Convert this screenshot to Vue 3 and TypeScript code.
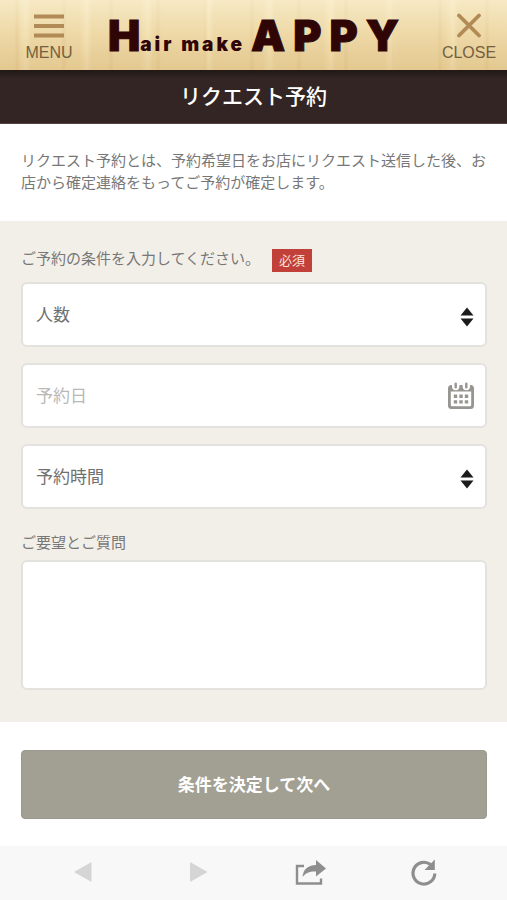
<script setup lang="ts">
import { ref } from 'vue'

const people = ref('')
const date = ref('')
const time = ref('')
const message = ref('')
const peopleOptions = [1, 2, 3, 4, 5]
const timeOptions = ['10:00', '11:00', '12:00', '13:00', '14:00', '15:00', '16:00', '17:00']
</script>

<template>
  <div class="page">
    <header class="header">
      <button type="button" class="header-button">
        <svg class="header-icon" viewBox="0 0 30 26" aria-hidden="true">
          <path d="M0 3.5h30M0 13h30M0 22.5h30" />
        </svg>
        <span>MENU</span>
      </button>
      <div class="logo">
        <span class="big">H</span><span class="small">air make</span><span class="big name">APPY</span>
      </div>
      <button type="button" class="header-button">
        <svg class="header-icon" viewBox="0 0 30 26" aria-hidden="true">
          <path d="M5 2.5l20 20M25 2.5l-20 20" stroke-linecap="round" />
        </svg>
        <span>CLOSE</span>
      </button>
    </header>

    <h1 class="title">リクエスト予約</h1>

    <p class="intro">リクエスト予約とは、予約希望日をお店にリクエスト送信した後、お店から確定連絡をもってご予約が確定します。</p>

    <form class="form" @submit.prevent>
      <div class="conditions">
        <div class="heading">
          <label class="label" for="people">ご予約の条件を入力してください。</label>
          <span class="required">必須</span>
        </div>
        <div class="fields">
          <div class="field">
            <select id="people" v-model="people">
              <option value="">人数</option>
              <option v-for="n in peopleOptions" :key="n" :value="String(n)">{{ n }}</option>
            </select>
            <svg class="arrows" viewBox="0 0 14 20" aria-hidden="true">
              <path d="M7 0.5L13.5 8.5H0.5zM7 19.5L0.5 11.5H13.5z" />
            </svg>
          </div>
          <div class="field">
            <input id="date" v-model="date" type="text" placeholder="予約日" aria-label="予約日" />
            <svg class="calendar" viewBox="0 0 26 28" aria-hidden="true">
              <path
                fill-rule="evenodd"
                d="M3.500 3H4V4.500A3.700 3.700 0 0 0 11.400 4.500V3H14.600V4.500A3.700 3.700 0 0 0 22 4.500V3H22.500A3.500 3.500 0 0 1 26 6.500V23.500A3.500 3.500 0 0 1 22.500 27H3.500A3.500 3.500 0 0 1 0 23.500V6.500A3.500 3.500 0 0 1 3.500 3ZM2.800 9.500V23A1.300 1.300 0 0 0 4.100 24.300H21.900A1.300 1.300 0 0 0 23.200 23V9.500Z"
              />
              <rect x="6.500" y="0.500" width="2.400" height="6" rx="1.200" />
              <rect x="17.100" y="0.500" width="2.400" height="6" rx="1.200" />
              <path d="M5.800 12.500h3.400v3.400h-3.400zM11.300 12.500h3.400v3.400h-3.400zM16.800 12.500h3.400v3.400h-3.400zM5.800 18.200h3.400v3.400h-3.400zM11.300 18.200h3.400v3.400h-3.400zM16.800 18.200h3.400v3.400h-3.400z" />
            </svg>
          </div>
          <div class="field">
            <select id="time" v-model="time" aria-label="予約時間">
              <option value="">予約時間</option>
              <option v-for="t in timeOptions" :key="t" :value="t">{{ t }}</option>
            </select>
            <svg class="arrows" viewBox="0 0 14 20" aria-hidden="true">
              <path d="M7 0.5L13.5 8.5H0.5zM7 19.5L0.5 11.5H13.5z" />
            </svg>
          </div>
        </div>
        <label class="label message-label" for="message">ご要望とご質問</label>
        <textarea id="message" v-model="message"></textarea>
      </div>
      <div class="actions">
        <button type="submit" class="submit">条件を決定して次へ</button>
      </div>
    </form>

    <nav class="toolbar">
      <button type="button" aria-label="戻る" disabled>
        <svg class="nav-icon faint" viewBox="0 0 32 28" aria-hidden="true"><path d="M7 13L24.500 3V23z" /></svg>
      </button>
      <button type="button" aria-label="進む" disabled>
        <svg class="nav-icon faint" viewBox="0 0 32 28" aria-hidden="true"><path d="M26.500 13L9 3V23z" /></svg>
      </button>
      <button type="button" aria-label="共有">
        <svg class="nav-icon" viewBox="0 0 32 28" aria-hidden="true">
          <path d="M10 7H3V24.500H27V19.500" fill="none" stroke="#8e8e8e" stroke-width="2.400" />
          <path d="M8.500 18C9.500 10 13.500 6.500 22 6V1L32 9.500L22 17.500V12.500C16 12.200 12 13.500 8.500 18Z" />
        </svg>
      </button>
      <button type="button" aria-label="再読み込み">
        <svg class="nav-icon" viewBox="0 0 32 28" aria-hidden="true">
          <path d="M26.800 14.500A10.900 10.900 0 1 1 22.500 5.500" fill="none" stroke="#8e8e8e" stroke-width="3.200" />
          <path d="M26.800 0.500V11H16.500Z" />
        </svg>
      </button>
    </nav>
  </div>
</template>

<style>
body {
  margin: 0;
  background: #fff;
}
</style>

<style scoped>
.page {
  display: flex;
  flex-direction: column;
  min-height: 100vh;
  font-family: "Liberation Sans", "Noto Sans CJK JP", sans-serif;
  color: #777;
}

button,
select,
input,
textarea {
  box-sizing: border-box;
  margin: 0;
  border: 0;
  font-family: inherit;
}

.header {
  display: grid;
  grid-template-columns: 98px 1fr 76px;
  align-items: center;
  box-sizing: border-box;
  height: 70px;
  padding-top: 6px;
  background:
    linear-gradient(rgba(255, 250, 225, 0.55), rgba(255, 240, 200, 0.1) 50%, rgba(198, 158, 85, 0.24)),
    repeating-linear-gradient(90deg, rgba(190, 145, 70, 0) 0 14px, rgba(190, 145, 70, 0.12) 17px, rgba(190, 145, 70, 0) 20px 47px),
    repeating-linear-gradient(90deg, rgba(255, 245, 210, 0) 0 18px, rgba(255, 245, 210, 0.35) 26px, rgba(255, 245, 210, 0) 31px 61px),
    #ecd5a2;
}

.header-button {
  display: flex;
  flex-direction: column;
  align-items: center;
  gap: 4px;
  padding: 0;
  background: none;
  color: #736040;
  font-size: 16px;
  line-height: 20px;
}

.header-icon {
  width: 30px;
  height: 26px;
  fill: none;
  stroke: #b18a56;
  stroke-width: 3.8;
}

.logo {
  display: flex;
  align-items: baseline;
  justify-content: center;
  padding: 4px 14px 0 0;
  font-family: Inter, "Liberation Sans", sans-serif;
  font-weight: 900;
  line-height: 50px;
  color: #300505;
  white-space: nowrap;
}

.big {
  font-size: 43px;
  -webkit-text-stroke: 1px #300505;
}

.small {
  font-size: 19px;
  letter-spacing: 3px;
}

.name {
  margin-left: 6px;
  letter-spacing: 8px;
}

.title {
  margin: 0;
  padding: 11px 0 10px;
  border-bottom: 1px solid #51423f;
  background: linear-gradient(#211816, #322524 8px);
  color: #fff;
  font-size: 21px;
  font-weight: 500;
  line-height: 32px;
  text-align: center;
}

.intro {
  margin: 0;
  padding: 26px 20px 27px 21px;
  font-size: 15px;
  line-height: 22px;
}

.conditions {
  padding: 26px 20px 32px 21px;
  background: #f2efe9;
}

.heading {
  display: flex;
  align-items: center;
  gap: 12px;
  height: 26px;
}

.label {
  display: block;
  font-size: 15px;
  line-height: 26px;
}

.heading .label {
  padding-bottom: 2px;
}

.required {
  padding: 0 7px;
  background: #c2403a;
  color: #fbe3dc;
  font-size: 13px;
  line-height: 23px;
}

.fields {
  display: grid;
  gap: 16px;
  padding-top: 9px;
}

.field {
  display: grid;
  align-items: center;
}

.field > * {
  grid-area: 1 / 1;
}

.field select,
.field input {
  width: 100%;
  height: 65px;
  padding: 2px 52px 0 13px;
  border: 2px solid #e3e2de;
  border-radius: 6px;
  appearance: none;
  background: #fff;
  color: #707070;
  font-size: 17px;
}

.field input::placeholder {
  color: #b8b8b8;
  opacity: 1;
}

.arrows,
.calendar {
  justify-self: end;
  pointer-events: none;
}

.arrows {
  width: 14px;
  height: 20px;
  margin: 4px 13px 0 0;
  fill: #1c1a1a;
}

.calendar {
  width: 26px;
  height: 28px;
  margin-right: 13px;
  fill: #979590;
}

.message-label {
  padding-top: 21px;
}

textarea {
  display: block;
  width: 100%;
  height: 130px;
  margin-top: 4px;
  padding: 14px;
  border: 2px solid #e3e2de;
  border-radius: 6px;
  background: #fff;
  color: #707070;
  font-size: 17px;
  resize: none;
}

.actions {
  padding: 28px 20px 27px 21px;
}

.submit {
  display: block;
  width: 100%;
  height: 69px;
  padding: 0 0 3px;
  border: 1px solid #9b988e;
  border-radius: 4px;
  background: #a29f93;
  color: #fff;
  font-size: 17px;
  font-weight: 700;
}

.toolbar {
  display: grid;
  grid-template-columns: repeat(4, 1fr);
  height: 54px;
  margin-top: auto;
  padding: 0 26px;
  background: #f8f8f8;
}

.toolbar button {
  display: grid;
  place-items: center;
  padding: 0;
  background: none;
}

.nav-icon {
  width: 32px;
  height: 28px;
  fill: #8e8e8e;
}

.faint {
  fill: #d5d5d5;
}
</style>
